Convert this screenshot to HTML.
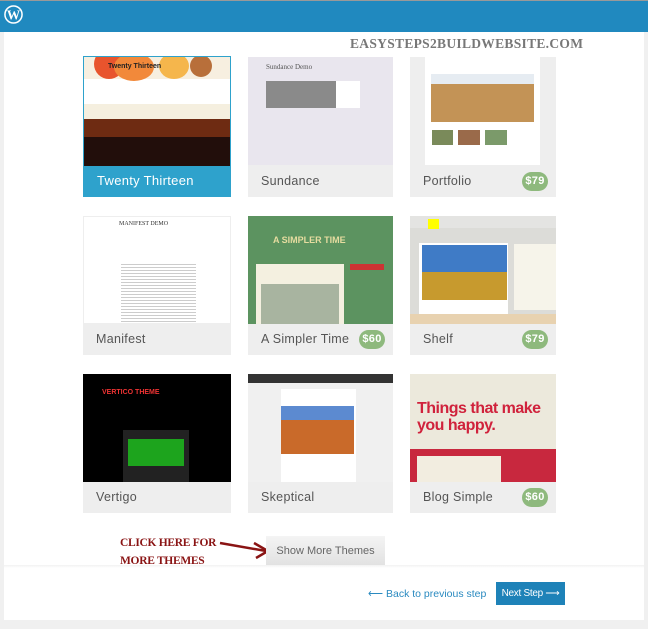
<!DOCTYPE html>
<html><head><meta charset="utf-8"><style>
*{margin:0;padding:0;box-sizing:border-box}
body{width:648px;height:629px;background:#f0f0f0;font-family:"Liberation Sans",sans-serif;position:relative;overflow:hidden}
.a{position:absolute}
.card{position:absolute;background:#eeeeee}
.lab{position:absolute;left:0;right:0;bottom:0;height:32px;font-size:12.5px;color:#555;padding:9px 0 0 13px;letter-spacing:.3px}
.pr{position:absolute;right:8px;top:7px;width:26px;height:19px;border-radius:10px;background:#8eb97d;color:#fff;font-size:11px;font-weight:bold;text-align:center;line-height:19px}
.th{position:absolute;left:0;top:0;right:0;overflow:hidden}
</style></head><body>
<div class="a" style="left:0;top:0;width:648px;height:1px;background:#999"></div>
<div class="a" style="left:0;top:1px;width:648px;height:31px;background:#2089bf"></div>
<svg class="a" style="left:4px;top:5px" width="19" height="19" viewBox="0 0 20 20"><circle cx="10" cy="10" r="9" fill="none" stroke="#fff" stroke-width="1.6"/><text x="10" y="15" text-anchor="middle" font-family="Liberation Serif" font-size="14" font-weight="bold" fill="#fff">W</text></svg>
<div class="a" style="left:4px;top:32px;width:640px;height:588px;background:#fff"></div>
<div class="a" style="left:350px;top:36px;font-family:'Liberation Serif',serif;font-weight:bold;font-size:13.5px;color:#777;letter-spacing:.3px">EASYSTEPS2BUILDWEBSITE.COM</div>

<!-- row1 -->
<div class="card" style="left:83px;top:56px;width:148px;height:141px;background:#2ea2cc;border:1px solid #2ea2cc">
 <div class="th" style="height:109px;background:#fff">
  <div class="a" style="left:0;top:0;width:148px;height:22px;background:#f7efe0"></div>
  <div class="a" style="left:10px;top:-8px;width:30px;height:30px;border-radius:50%;background:#e8542d"></div>
  <div class="a" style="left:30px;top:-4px;width:40px;height:28px;border-radius:50%;background:#f2893a"></div>
  <div class="a" style="left:75px;top:-4px;width:30px;height:26px;border-radius:50%;background:#f5b64c"></div>
  <div class="a" style="left:106px;top:-2px;width:22px;height:22px;border-radius:50%;background:#b86f3a"></div>
  <div class="a" style="left:24px;top:6px;font-size:7px;font-weight:bold;color:#222">Twenty Thirteen</div>
  <div class="a" style="left:0;top:47px;width:148px;height:15px;background:#f5efdf"></div>
  <div class="a" style="left:0;top:62px;width:148px;height:18px;background:#6e2b12"></div>
  <div class="a" style="left:0;top:80px;width:148px;height:29px;background:#220e0b"></div>
 </div>
 <div class="lab" style="color:#fff;font-size:13px">Twenty Thirteen</div>
</div>
<div class="card" style="left:248px;top:57px;width:145px;height:140px">
 <div class="th" style="height:108px;background:#e9e6ee">
  <div class="a" style="left:18px;top:6px;font-family:'Liberation Serif';font-size:7px;color:#555">Sundance Demo</div>
  <div class="a" style="left:18px;top:24px;width:70px;height:27px;background:#8a8a8a"></div>
  <div class="a" style="left:88px;top:24px;width:24px;height:27px;background:#fff"></div>
 </div>
 <div class="lab">Sundance</div>
</div>
<div class="card" style="left:410px;top:57px;width:146px;height:140px">
 <div class="th" style="height:108px;background:#eee">
  <div class="a" style="left:15px;top:0;width:115px;height:108px;background:#fff"></div>
  <div class="a" style="left:21px;top:17px;width:103px;height:48px;background:#c39356"></div>
  <div class="a" style="left:21px;top:17px;width:103px;height:10px;background:#e6ecf2"></div>
  <div class="a" style="left:22px;top:73px;width:21px;height:15px;background:#7a8a5a"></div>
  <div class="a" style="left:48px;top:73px;width:22px;height:15px;background:#9a6a4a"></div>
  <div class="a" style="left:75px;top:73px;width:22px;height:15px;background:#7b9a6a"></div>
 </div>
 <div class="lab">Portfolio<div class="pr">$79</div></div>
</div>

<!-- row2 -->
<div class="card" style="left:83px;top:216px;width:148px;height:139px">
 <div class="th" style="height:108px;background:#fff;border:1px solid #eee">
  <div class="a" style="left:35px;top:4px;font-family:'Liberation Serif';font-size:6px;color:#333">MANIFEST DEMO</div>
  <div class="a" style="left:37px;top:45px;width:75px;height:62px;background:repeating-linear-gradient(#fff 0 2px,#ccc 2px 3px)"></div>
 </div>
 <div class="lab">Manifest</div>
</div>
<div class="card" style="left:248px;top:216px;width:145px;height:139px">
 <div class="th" style="height:108px;background:#5c9360">
  <div class="a" style="left:25px;top:19px;font-size:9px;font-weight:bold;color:#e6dca0">A SIMPLER TIME</div>
  <div class="a" style="left:8px;top:48px;width:88px;height:62px;background:#f4f0e0"></div>
  <div class="a" style="left:13px;top:68px;width:78px;height:40px;background:#a8b4a0"></div>
  <div class="a" style="left:102px;top:48px;width:34px;height:6px;background:#c33"></div>
 </div>
 <div class="lab">A Simpler Time<div class="pr">$60</div></div>
</div>
<div class="card" style="left:410px;top:216px;width:146px;height:139px">
 <div class="th" style="height:108px;background:#dcdcd8">
  <div class="a" style="left:0;top:0;width:146px;height:12px;background:#e4e4e2"></div>
  <div class="a" style="left:18px;top:3px;width:11px;height:10px;background:#ff0"></div>
  <div class="a" style="left:9px;top:27px;width:89px;height:74px;background:#fff"></div>
  <div class="a" style="left:12px;top:29px;width:85px;height:27px;background:#3f7bc6"></div>
  <div class="a" style="left:12px;top:56px;width:85px;height:28px;background:#c79a2e"></div>
  <div class="a" style="left:0;top:98px;width:146px;height:10px;background:#e8d2b0"></div>
  <div class="a" style="left:104px;top:28px;width:42px;height:66px;background:#f6f4ea"></div>
 </div>
 <div class="lab">Shelf<div class="pr">$79</div></div>
</div>

<!-- row3 -->
<div class="card" style="left:83px;top:374px;width:148px;height:139px">
 <div class="th" style="height:108px;background:#000">
  <div class="a" style="left:19px;top:15px;font-size:7px;font-weight:bold;color:#e33">VERTICO THEME</div>
  <div class="a" style="left:40px;top:56px;width:66px;height:52px;background:#222"></div>
  <div class="a" style="left:45px;top:65px;width:56px;height:27px;background:#1da41d"></div>
 </div>
 <div class="lab">Vertigo</div>
</div>
<div class="card" style="left:248px;top:374px;width:145px;height:139px">
 <div class="th" style="height:108px;background:#f0f0f0">
  <div class="a" style="left:0;top:0;width:145px;height:9px;background:#333"></div>
  <div class="a" style="left:33px;top:15px;width:75px;height:93px;background:#fff"></div>
  <div class="a" style="left:33px;top:32px;width:73px;height:48px;background:#c96a2a"></div>
  <div class="a" style="left:33px;top:32px;width:73px;height:14px;background:#5c8ad0"></div>
 </div>
 <div class="lab">Skeptical</div>
</div>
<div class="card" style="left:410px;top:374px;width:146px;height:139px">
 <div class="th" style="height:108px;background:#ece9dc">
  <div class="a" style="left:7px;top:26px;font-size:16px;font-weight:bold;color:#d0223c;line-height:17px;letter-spacing:-.5px">Things that make<br>you happy.</div>
  <div class="a" style="left:0;top:75px;width:146px;height:33px;background:#c8283e"></div>
  <div class="a" style="left:7px;top:82px;width:84px;height:26px;background:#f2ede0"></div>
 </div>
 <div class="lab">Blog Simple<div class="pr">$60</div></div>
</div>

<div class="a" style="left:120px;top:534px;font-family:'Liberation Serif',serif;font-weight:bold;font-size:11.5px;color:#8a1414;line-height:18px;letter-spacing:-.3px">CLICK HERE FOR<br>MORE THEMES</div>
<svg class="a" style="left:218px;top:538px" width="52" height="22"><path d="M2 5 L48 13" stroke="#8a1414" stroke-width="2.5"/><path d="M36 5 L50 13 L38 20" stroke="#8a1414" stroke-width="2.5" fill="none"/></svg>
<div class="a" style="left:266px;top:536px;width:119px;height:29px;background:linear-gradient(#f4f4f4,#e2e2e2);color:#666;font-size:11px;text-align:center;line-height:30px">Show More Themes</div>
<div class="a" style="left:4px;top:565px;width:640px;height:3px;background:linear-gradient(#f2f2f2,#fff)"></div>
<div class="a" style="left:368px;top:588px;font-size:10.5px;color:#2a8ac0">⟵ Back to previous step</div>
<div class="a" style="left:496px;top:582px;width:69px;height:23px;background:#1e82b8;color:#fff;font-size:10px;text-align:center;line-height:23px;letter-spacing:-.3px">Next Step ⟶</div>
</body></html>
